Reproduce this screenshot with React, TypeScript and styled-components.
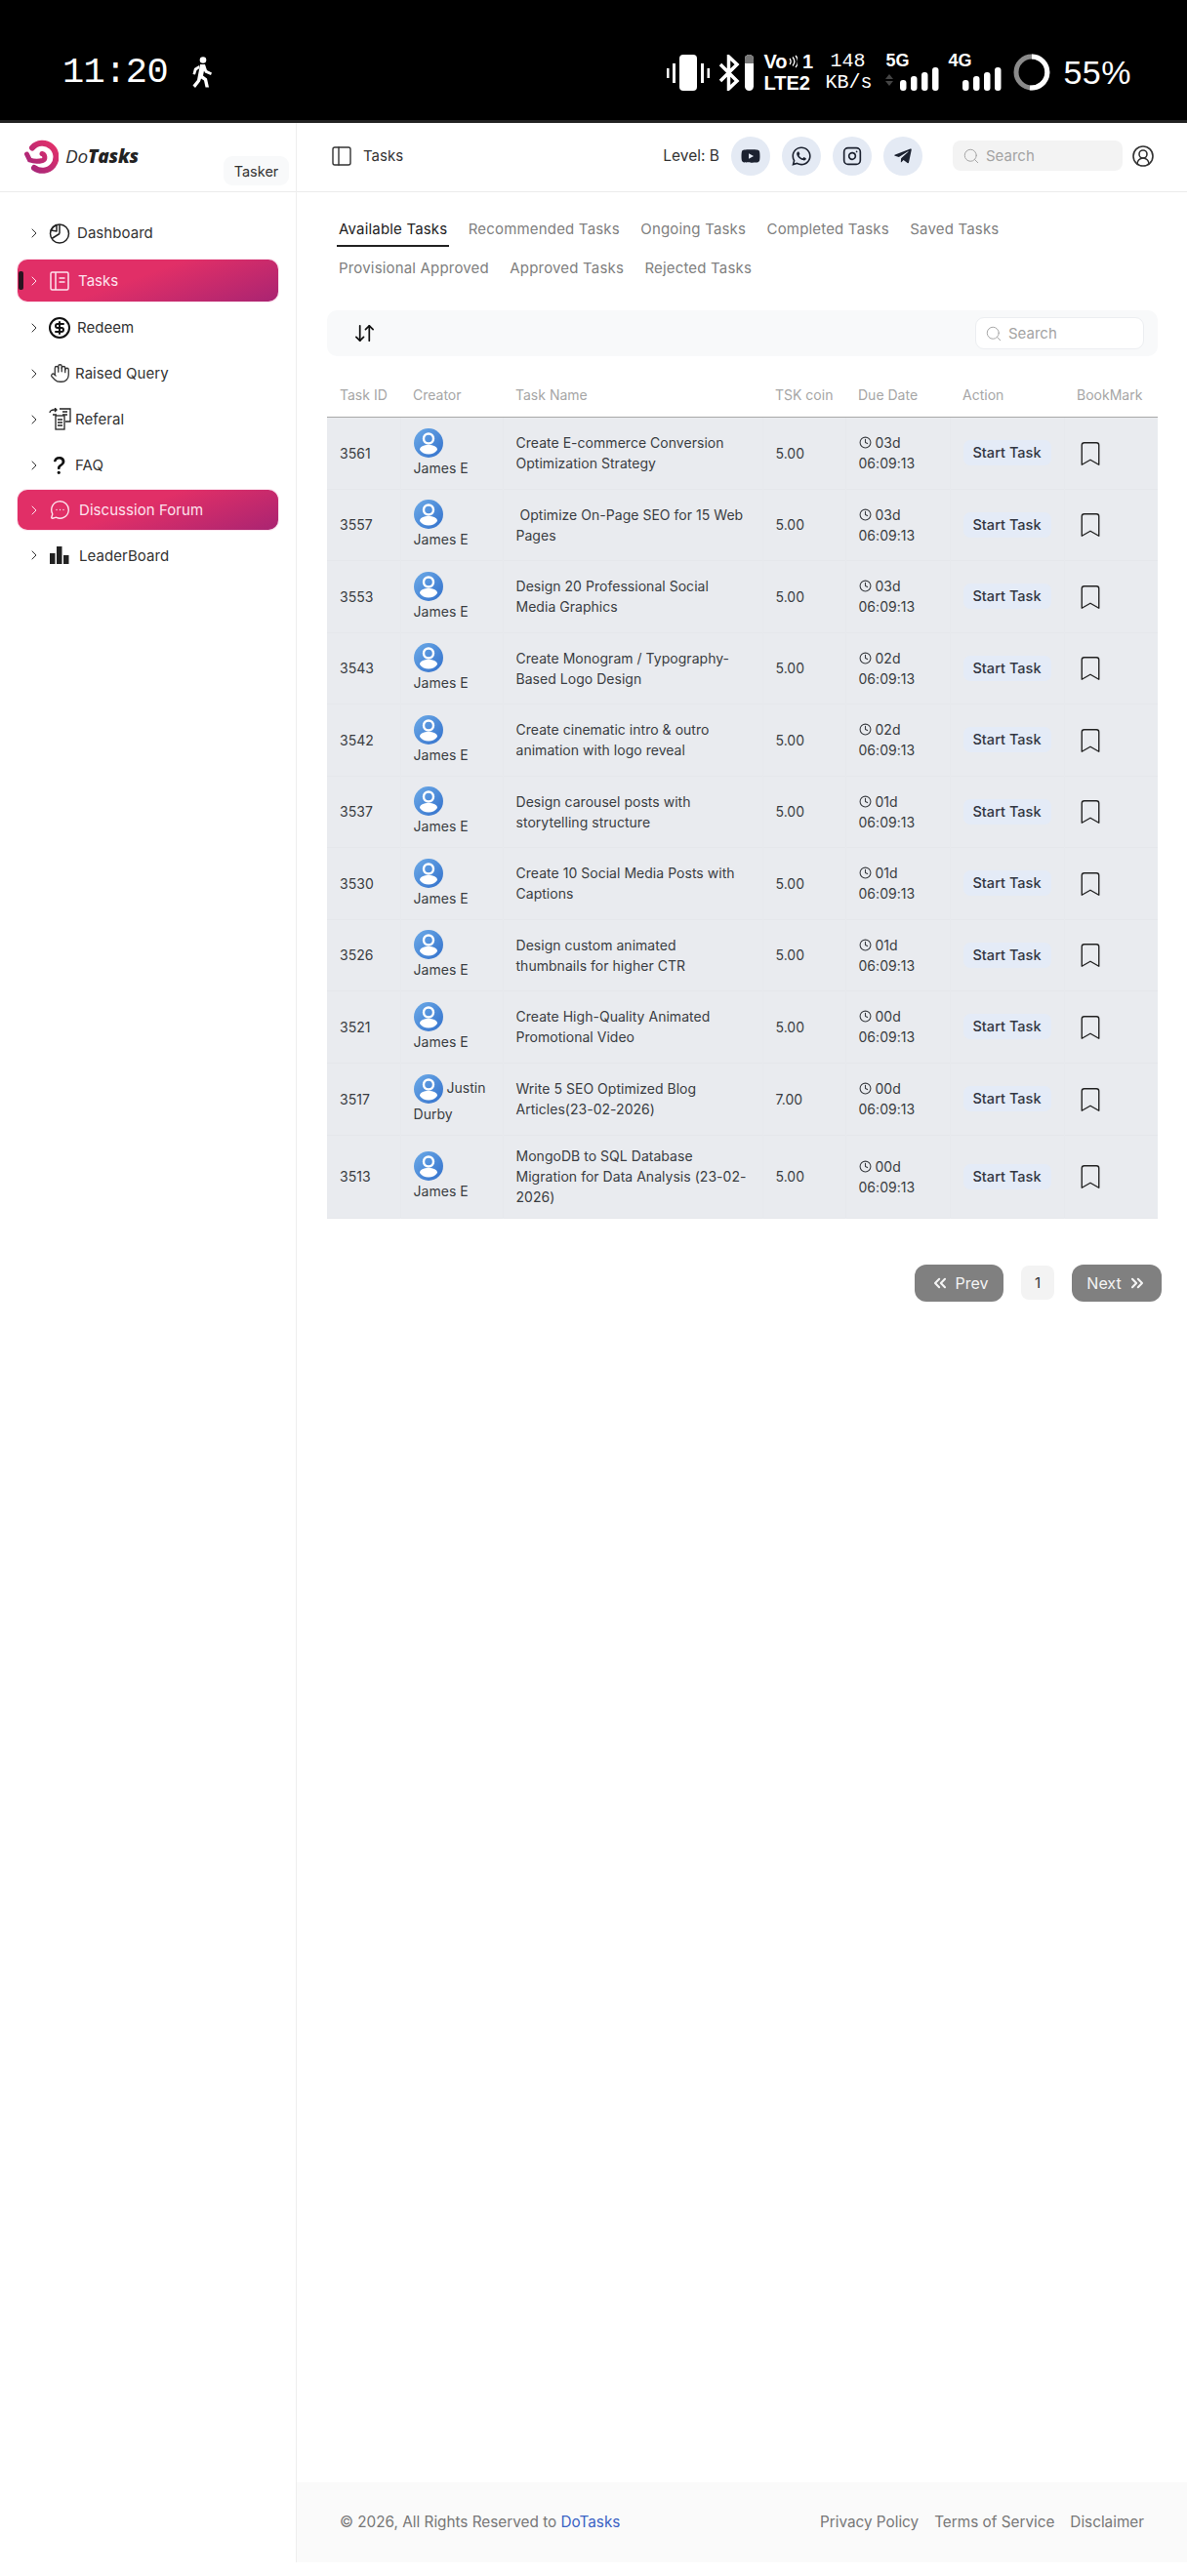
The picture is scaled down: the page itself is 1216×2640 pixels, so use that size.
import styled, { createGlobalStyle } from 'styled-components';
import {
  ArrowDownUp, Bookmark, ChevronRight, ChevronsLeft, ChevronsRight, CircleDollarSign, CircleUserRound,
  Clock, Hand, Instagram, MessageCircleMore, PanelLeft, Search as SearchIcon,
} from 'lucide-react';
import { FaTelegramPlane, FaWhatsapp, FaYoutube } from 'react-icons/fa';
import { BsQuestionLg } from 'react-icons/bs';

const GlobalStyle = createGlobalStyle`
  html, body { margin: 0; padding: 0; background: #fff; }
  body { font-family: Inter, "Noto Sans", sans-serif; color: #222; }
  * { box-sizing: border-box; }
`;

const Page = styled.div`
  width: 1216px;
  height: 2640px;
  display: flex;
  flex-direction: column;
  background: #fff;
`;

/* phone status bar */
const StatusBar = styled.div`
  height: 126px;
  flex: none;
  background: #000;
  border-bottom: 3px solid #222;
  color: #fff;
  display: flex;
  align-items: center;
  justify-content: space-between;
  padding: 25px 57px 0 64px;
`;
const StatusLeft = styled.div`
  display: flex;
  align-items: center;
  gap: 24px;
`;
const Time = styled.span`
  font-family: "Liberation Mono", monospace;
  font-size: 37px;
  letter-spacing: -0.6px;
`;
const StatusRight = styled.div`
  display: flex;
  align-items: center;
`;
const Stack = styled.div<{ $ml: number; $w: number }>`
  margin-left: ${(p) => p.$ml}px;
  width: ${(p) => p.$w}px;
  display: flex;
  flex-direction: column;
  gap: 6px;
  font-family: "Liberation Sans", sans-serif;
`;
const StackBold = styled.span`
  font-size: 20px;
  line-height: 16px;
  font-weight: 700;
  display: flex;
  align-items: center;
  white-space: nowrap;
`;
const StackThin = styled.span`
  font-family: "Liberation Mono", monospace;
  font-size: 20px;
  line-height: 16px;
  text-align: center;
  white-space: nowrap;
`;
const Network = styled.div<{ $ml: number }>`
  margin-left: ${(p) => p.$ml}px;
  width: 56px;
  display: flex;
  flex-direction: column;
`;
const NetLabel = styled.span`
  font-family: "Liberation Sans", sans-serif;
  font-weight: 700;
  font-size: 18px;
  line-height: 14px;
`;
const Battery = styled.span`
  margin-left: 13px;
  font-family: "Liberation Sans", sans-serif;
  font-size: 34px;
  letter-spacing: 0.5px;
  line-height: 1;
`;
const StatusIcon = styled.svg<{ $ml?: number }>`
  display: block;
  flex: none;
  margin-left: ${(p) => p.$ml ?? 0}px;
`;

/* app frame */
const Shell = styled.div`
  height: 2500px;
  flex: none;
  display: flex;
`;
const Sidebar = styled.aside`
  width: 304px;
  flex: none;
  border-right: 1px solid #eee;
`;
const Brand = styled.div`
  height: 71px;
  border-bottom: 1px solid #ebebeb;
  display: flex;
  align-items: flex-start;
  padding: 17px 7px 0 24px;
`;
const LogoText = styled.span`
  margin: 6px 0 0 7px;
  font-family: "Open Sans", Lato, sans-serif;
  font-style: italic;
  font-size: 19px;
  letter-spacing: -0.2px;
  color: #333;
  line-height: 22px;
  b { font-weight: 800; color: #222; }
`;
const RoleBadge = styled.span`
  margin-left: auto;
  margin-top: 17px;
  width: 67px;
  height: 30px;
  border-radius: 9px;
  background: #f8f9fa;
  font-size: 14.5px;
  color: #333;
  display: flex;
  align-items: center;
  justify-content: center;
`;
const Nav = styled.nav`
  padding: 18px 0 0 18px;
  width: 285px;
`;
const NavItem = styled.div<{ $active?: boolean; $h: number; $mt?: number; $mb?: number; $indent: number }>`
  position: relative;
  height: ${(p) => p.$h}px;
  margin-top: ${(p) => p.$mt ?? 0}px;
  margin-bottom: ${(p) => p.$mb ?? 0}px;
  display: flex;
  align-items: center;
  padding-left: 9px;
  font-size: 15px;
  letter-spacing: 0.05px;
  color: ${(p) => (p.$active ? '#fde3ee' : '#333')};
  border-radius: 10px;
  background: ${(p) => (p.$active ? 'linear-gradient(160deg, #e12f67 45%, #a92472 100%)' : 'transparent')};
  box-shadow: ${(p) => (p.$active ? '0 0 0 1px #fbe3ee' : 'none')};
  span { margin-left: ${(p) => p.$indent}px; }
`;
const ActiveTick = styled.i`
  position: absolute;
  left: 1px;
  top: 12px;
  width: 5px;
  height: 19px;
  border-radius: 2px;
  background: #2a1420;
`;
const IconSlot = styled.div<{ $dark?: boolean }>`
  width: 24px;
  margin-left: 6px;
  flex: none;
  display: flex;
  align-items: center;
  justify-content: center;
  color: ${(p) => (p.$dark ? '#111' : 'inherit')};
`;

const Main = styled.main`
  flex: 1;
  min-width: 0;
  display: flex;
  flex-direction: column;
`;
const TopNav = styled.header`
  height: 71px;
  flex: none;
  border-bottom: 1px solid #ebebeb;
  display: flex;
  align-items: center;
  padding: 0 33px 3px 34px;
  font-size: 14px;
  color: #333;
`;
const PageName = styled.span`
  margin-left: 10px;
  font-size: 15px;
`;
const Level = styled.span`
  margin-left: auto;
  margin-right: 12px;
  font-size: 15.5px;
`;
const Social = styled.div`
  width: 40px;
  height: 40px;
  margin-right: 12px;
  border-radius: 50%;
  background: #e4eaf4;
  color: #1c2230;
  display: flex;
  align-items: center;
  justify-content: center;
`;
const NavSearch = styled.div`
  width: 174px;
  height: 31px;
  margin: 0 9px 0 19px;
  padding-left: 10px;
  border-radius: 8px;
  background: #f3f3f3;
  color: #a3a3a3;
  display: flex;
  align-items: center;
  gap: 6px;
  font-size: 15px;
`;
const Content = styled.div`
  flex: 1;
  padding: 18px 30px 0 31px;
`;
const Tabs = styled.div`
  display: flex;
  flex-wrap: wrap;
  column-gap: 17.4px;
  padding-left: 10px;
`;
const Tab = styled.div<{ $active?: boolean }>`
  height: 40px;
  padding: 0 2px;
  line-height: 40px;
  font-size: 15px;
  letter-spacing: 0.18px;
  color: ${(p) => (p.$active ? '#222' : '#808080')};
  position: relative;
  &::after {
    content: '';
    display: ${(p) => (p.$active ? 'block' : 'none')};
    position: absolute;
    left: 0;
    right: 0;
    top: 36px;
    height: 2px;
    background: #222;
  }
`;
const Toolbar = styled.div`
  margin-top: 23px;
  height: 47px;
  background: #f8f9fa;
  border-radius: 10px;
  display: flex;
  align-items: center;
  justify-content: space-between;
  padding: 0 14px 0 27px;
`;
const TableSearch = styled.div`
  width: 173px;
  height: 33px;
  background: #fff;
  border: 1px solid #eceef1;
  border-radius: 9px;
  padding-left: 9px;
  display: flex;
  align-items: center;
  gap: 6px;
  color: #a3a3a3;
  font-size: 15px;
`;
const Table = styled.table`
  margin-top: 20px;
  width: 851px;
  table-layout: fixed;
  border-collapse: collapse;
`;
const HeadCell = styled.th<{ $w: number }>`
  width: ${(p) => p.$w}px;
  height: 42px;
  padding: 0 0 2px 13px;
  text-align: left;
  font-size: 14px;
  font-weight: 400;
  color: #a6a6a6;
  border-bottom: 1px solid #a8a8a8;
  white-space: nowrap;
`;
const Row = styled.tr<{ $h: number }>`
  height: ${(p) => p.$h}px;
  background: #e9ebef;
  border-bottom: 1px solid #e5e7eb;
`;
const Cell = styled.td`
  padding: 0 13px;
  font-size: 14px;
  line-height: 21px;
  letter-spacing: 0.03px;
  color: #3a3d42;
  border-left: 1px solid #e7e9ed;
  &:first-child { border-left: 0; }
`;
const Avatar = styled.svg`
  width: 30px;
  height: 30px;
  vertical-align: middle;
`;
const StartTask = styled.span`
  display: inline-block;
  width: 90px;
  height: 26px;
  line-height: 26px;
  border-radius: 7px;
  background: #e4ebf7;
  text-align: center;
  font-size: 14.5px;
  font-weight: 500;
  color: #333743;
`;
const ClockIcon = styled(Clock)`
  vertical-align: -1px;
  margin-right: 4px;
`;
const BookmarkIcon = styled(Bookmark)`
  display: block;
  margin: 1px 0 0 -2px;
`;
const Pager = styled.div`
  margin: 47px -4px 0 0;
  display: flex;
  justify-content: flex-end;
  align-items: center;
  gap: 18px;
`;
const PageButton = styled.div<{ $w: number }>`
  width: ${(p) => p.$w}px;
  height: 38px;
  border-radius: 12px;
  background: #808080;
  color: #f4f4f4;
  font-size: 16px;
  display: flex;
  align-items: center;
  justify-content: center;
  gap: 6px;
`;
const PageNumber = styled.div`
  width: 34px;
  height: 35px;
  border-radius: 8px;
  background: #f3f3f3;
  font-size: 15px;
  color: #333;
  display: flex;
  align-items: center;
  justify-content: center;
`;
const Footer = styled.footer`
  height: 82px;
  flex: none;
  background: #fafafa;
  padding: 0 44px 2px 44px;
  display: flex;
  align-items: center;
  justify-content: space-between;
  font-size: 15.3px;
  color: #777;
`;
const FooterLinks = styled.div`
  display: flex;
  gap: 16px;
`;
const Blue = styled.span`
  color: #3b63c4;
`;

type Task = { id: number; creator: string; name: string; coin: string; days: string; h: number };

const JAMES = 'James\u00a0E';

const tasks: Task[] = [
  { id: 3561, creator: JAMES, name: 'Create E-commerce Conversion Optimization Strategy', coin: '5.00', days: '03d', h: 74 },
  { id: 3557, creator: JAMES, name: '\u00a0Optimize On-Page SEO for 15 Web Pages', coin: '5.00', days: '03d', h: 73 },
  { id: 3553, creator: JAMES, name: 'Design 20 Professional Social Media Graphics', coin: '5.00', days: '03d', h: 74 },
  { id: 3543, creator: JAMES, name: 'Create Monogram / Typography-Based Logo Design', coin: '5.00', days: '02d', h: 73 },
  { id: 3542, creator: JAMES, name: 'Create cinematic intro & outro animation with logo reveal', coin: '5.00', days: '02d', h: 74 },
  { id: 3537, creator: JAMES, name: 'Design carousel posts with storytelling structure', coin: '5.00', days: '01d', h: 73 },
  { id: 3530, creator: JAMES, name: 'Create 10 Social Media Posts with Captions', coin: '5.00', days: '01d', h: 74 },
  { id: 3526, creator: JAMES, name: 'Design custom animated thumbnails for higher CTR', coin: '5.00', days: '01d', h: 73 },
  { id: 3521, creator: JAMES, name: 'Create High-Quality Animated Promotional Video', coin: '5.00', days: '00d', h: 74 },
  { id: 3517, creator: 'Justin Durby', name: 'Write 5 SEO Optimized Blog Articles(23-02-2026)', coin: '7.00', days: '00d', h: 74 },
  { id: 3513, creator: JAMES, name: 'MongoDB to SQL Database Migration for Data Analysis (23-02-2026)', coin: '5.00', days: '00d', h: 85 },
];

const columns = [
  ['Task ID', 75], ['Creator', 105], ['Task Name', 266], ['TSK coin', 85], ['Due Date', 107], ['Action', 117], ['BookMark', 96],
] as const;

const tabs = [
  'Available Tasks', 'Recommended Tasks', 'Ongoing Tasks', 'Completed Tasks', 'Saved Tasks',
  'Provisional Approved', 'Approved Tasks', 'Rejected Tasks',
];

function Bars({ arrows }: { arrows?: boolean }) {
  return (
    <StatusIcon width="56" height="24" viewBox="0 0 56 24" fill="#fff">
      {arrows && <path d="M4 3l4 5H0zM4 15l4-5H0z" transform="translate(0 4)" fill="#444" />}
      <rect x="15" y="13" width="6.5" height="11" rx="3" />
      <rect x="26" y="9" width="6.5" height="15" rx="3" />
      <rect x="37" y="5" width="6.5" height="19" rx="3" />
      <rect x="48" y="0" width="6.5" height="24" rx="3" />
    </StatusIcon>
  );
}

function Logo() {
  return (
    <svg width="36" height="36" viewBox="0 0 36 36" fill="none">
      <defs>
        <linearGradient id="logoGrad" x1="30" y1="4" x2="4" y2="30" gradientUnits="userSpaceOnUse">
          <stop offset="0" stopColor="#e1306a" />
          <stop offset="1" stopColor="#a3267a" />
        </linearGradient>
      </defs>
      <path d="M9 8.5A14 14 0 1 1 11 29" stroke="url(#logoGrad)" strokeWidth="6" strokeLinecap="round" />
      <path d="M3.5 15l3 6c4 1.500 9 1.500 13 .5 3.500-1 3-6-.5-7" stroke="url(#logoGrad)" strokeWidth="5" strokeLinecap="round" />
    </svg>
  );
}

function UserAvatar({ id }: { id: number }) {
  const grad = `avatar${id}`;
  return (
    <Avatar viewBox="0 0 30 30">
      <defs>
        <linearGradient id={grad} x1="4" y1="4" x2="26" y2="26" gradientUnits="userSpaceOnUse">
          <stop offset="0" stopColor="#65a3e4" />
          <stop offset="1" stopColor="#3a78cf" />
        </linearGradient>
      </defs>
      <circle cx="15" cy="15" r="15" fill={`url(#${grad})`} />
      <circle cx="15" cy="10.5" r="5" fill="none" stroke="#fff" strokeWidth="2.4" />
      <path d="M6 22c0-3.500 4-5 9-5s9 1.500 9 5c-2 3-5.500 4.500-9 4.500S8 25 6 22z" fill="#fff" />
    </Avatar>
  );
}

const TasksIcon = () => (
  <svg width="20" height="20" viewBox="0 0 20 20" fill="none" stroke="currentColor" strokeWidth="1.5">
    <rect x="1" y="1" width="18" height="18" rx="1.5" />
    <path d="M6 1v18M9.500 7h6M9.500 11h6" />
  </svg>
);
const PieIcon = () => (
  <svg width="22" height="22" viewBox="0 0 22 22" fill="none" stroke="#222" strokeWidth="1.5" strokeLinejoin="round">
    <circle cx="11" cy="11.5" r="9.5" />
    <path d="M11 11.500V2M11 11.500l-8 5M2.200 8A10 10 0 0 1 8 2.500v6.500z" />
  </svg>
);
const ReferralIcon = () => (
  <svg width="23" height="23" viewBox="0 0 23 23" fill="none" stroke="#222" strokeWidth="1.3">
    <rect x="7" y="8" width="9" height="14" />
    <path d="M9 12h5M9 15h5M9 18h5M11 1h11v13h-5M14 4h5M14 7h5M1 5c0-2 2-3 4-3h3M6 0l2 2-2 2M8 7H4" />
  </svg>
);
const BoardIcon = () => (
  <svg width="20" height="18" viewBox="0 0 20 18" fill="#222">
    <rect x="0" y="7" width="5.5" height="11" />
    <rect x="7" y="0" width="5.5" height="18" />
    <rect x="14" y="9" width="5.5" height="9" />
  </svg>
);

function App() {
  return (
    <Page>
      <GlobalStyle />
      <StatusBar>
        <StatusLeft>
          <Time>11:20</Time>
          <StatusIcon width="22" height="33" viewBox="0 0 22 33" fill="#fff">
            <circle cx="12" cy="3.5" r="3.3" />
            <path d="M9 8h5l2 6 5 2.500-1 2.500-6-2.500-1-2-1 5 4 3 2 9h-3.500l-1.500-7-3-2-1 3-5 6.500-2.500-2.500 4.500-5.500z" />
            <path d="M8 9L3 12l-1.500 6 2.500.5 1.500-4.500 3-2z" />
          </StatusIcon>
        </StatusLeft>
        <StatusRight>
          <StatusIcon width="44" height="37" viewBox="0 0 44 37" fill="#fff">
            <rect x="13" y="0" width="18" height="37" rx="4" />
            <rect x="0" y="14" width="2.5" height="10" />
            <rect x="6" y="9" width="3" height="20" />
            <rect x="35" y="9" width="3" height="20" />
            <rect x="41.5" y="14" width="2.5" height="10" />
          </StatusIcon>
          <StatusIcon $ml={9} width="22" height="37" viewBox="0 0 22 37" fill="none" stroke="#fff" strokeWidth="3.5">
            <path d="M2 10l17 17-8.500 8V2l8.500 8L2 27" />
          </StatusIcon>
          <StatusIcon $ml={5} width="9" height="37" viewBox="0 0 9 37">
            <rect width="9" height="37" rx="4.5" fill="#fff" />
            <path d="M0 4.500a4.500 4.500 0 0 1 9 0V9H0z" fill="#777" />
          </StatusIcon>
          <Stack $ml={10} $w={48}>
            <StackBold>
              Vo
              <StatusIcon $ml={1} width="9" height="14" viewBox="0 0 9 14" fill="none" stroke="#fff" strokeWidth="1.3">
                <path d="M1 4c1.500 2 1.500 4 0 6M4 2.500c2.500 3 2.500 6 0 9M7 1c3.500 4 3.500 8 0 12" />
              </StatusIcon>
              &nbsp;1
            </StackBold>
            <StackBold>LTE2</StackBold>
          </Stack>
          <Stack $ml={15} $w={46}>
            <StackThin>148</StackThin>
            <StackThin>KB/s</StackThin>
          </Stack>
          <Network $ml={16}>
            <NetLabel>5G</NetLabel>
            <Bars arrows />
          </Network>
          <Network $ml={8}>
            <NetLabel>4G</NetLabel>
            <Bars />
          </Network>
          <StatusIcon $ml={11} width="38" height="38" viewBox="0 0 38 38" fill="none" strokeWidth="5">
            <circle cx="19" cy="19" r="16" stroke="#8a8a8a" />
            <path d="M19 3a16 16 0 1 1-2 31.900" stroke="#fff" />
          </StatusIcon>
          <Battery>55%</Battery>
        </StatusRight>
      </StatusBar>

      <Shell>
        <Sidebar>
          <Brand>
            <Logo />
            <LogoText>Do<b>Tasks</b></LogoText>
            <RoleBadge>Tasker</RoleBadge>
          </Brand>
          <Nav>
            <NavItem $h={47} $indent={6}>
              <ChevronRight size={16} strokeWidth={1.5} />
              <IconSlot><PieIcon /></IconSlot>
              <span>Dashboard</span>
            </NavItem>
            <NavItem $active $h={43} $mt={4} $mb={3} $indent={7}>
              <ActiveTick />
              <ChevronRight size={16} strokeWidth={1.5} />
              <IconSlot><TasksIcon /></IconSlot>
              <span>Tasks</span>
            </NavItem>
            <NavItem $h={47} $indent={6}>
              <ChevronRight size={16} strokeWidth={1.5} />
              <IconSlot $dark><CircleDollarSign size={24} strokeWidth={2} /></IconSlot>
              <span>Redeem</span>
            </NavItem>
            <NavItem $h={47} $indent={4}>
              <ChevronRight size={16} strokeWidth={1.5} />
              <IconSlot><Hand size={21} strokeWidth={1.5} /></IconSlot>
              <span>Raised Query</span>
            </NavItem>
            <NavItem $h={47} $indent={4}>
              <ChevronRight size={16} strokeWidth={1.5} />
              <IconSlot><ReferralIcon /></IconSlot>
              <span>Referal</span>
            </NavItem>
            <NavItem $h={47} $indent={4}>
              <ChevronRight size={16} strokeWidth={1.5} />
              <IconSlot $dark><BsQuestionLg size={24} /></IconSlot>
              <span>FAQ</span>
            </NavItem>
            <NavItem $active $h={41} $mt={2} $mb={3} $indent={8}>
              <ChevronRight size={16} strokeWidth={1.5} />
              <IconSlot><MessageCircleMore size={21} strokeWidth={1.6} /></IconSlot>
              <span>Discussion Forum</span>
            </NavItem>
            <NavItem $h={46} $indent={8}>
              <ChevronRight size={16} strokeWidth={1.5} />
              <IconSlot><BoardIcon /></IconSlot>
              <span>LeaderBoard</span>
            </NavItem>
          </Nav>
        </Sidebar>

        <Main>
          <TopNav>
            <PanelLeft size={24} strokeWidth={1.4} />
            <PageName>Tasks</PageName>
            <Level>Level: B</Level>
            <Social><FaYoutube size={20} /></Social>
            <Social><FaWhatsapp size={22} /></Social>
            <Social><Instagram size={20} strokeWidth={2} /></Social>
            <Social><FaTelegramPlane size={20} /></Social>
            <NavSearch><SearchIcon size={18} strokeWidth={1.3} />Search</NavSearch>
            <CircleUserRound size={24} strokeWidth={1.6} />
          </TopNav>
          <Content>
            <Tabs>
              {tabs.map((tab, i) => (
                <Tab key={tab} $active={i === 0}>{tab}</Tab>
              ))}
            </Tabs>
            <Toolbar>
              <ArrowDownUp size={23} strokeWidth={1.8} color="#111" />
              <TableSearch><SearchIcon size={18} strokeWidth={1.3} />Search</TableSearch>
            </Toolbar>
            <Table>
              <thead>
                <tr>
                  {columns.map(([label, w]) => (
                    <HeadCell key={label} $w={w}>{label}</HeadCell>
                  ))}
                </tr>
              </thead>
              <tbody>
                {tasks.map((t) => (
                  <Row key={t.id} $h={t.h}>
                    <Cell>{t.id}</Cell>
                    <Cell><UserAvatar id={t.id} /> {t.creator}</Cell>
                    <Cell>{t.name}</Cell>
                    <Cell>{t.coin}</Cell>
                    <Cell><ClockIcon size={13} strokeWidth={2} />{t.days}<br />06:09:13</Cell>
                    <Cell><StartTask>Start Task</StartTask></Cell>
                    <Cell><BookmarkIcon size={30} strokeWidth={1.1} color="#222" /></Cell>
                  </Row>
                ))}
              </tbody>
            </Table>
            <Pager>
              <PageButton $w={91}><ChevronsLeft size={20} strokeWidth={2.5} />Prev</PageButton>
              <PageNumber>1</PageNumber>
              <PageButton $w={92}>Next<ChevronsRight size={20} strokeWidth={2.5} /></PageButton>
            </Pager>
          </Content>
          <Footer>
            <div>© 2026, All Rights Reserved to <Blue>DoTasks</Blue></div>
            <FooterLinks>
              <span>Privacy Policy</span>
              <span>Terms of Service</span>
              <span>Disclaimer</span>
            </FooterLinks>
          </Footer>
        </Main>
      </Shell>
    </Page>
  );
}

export default App;
